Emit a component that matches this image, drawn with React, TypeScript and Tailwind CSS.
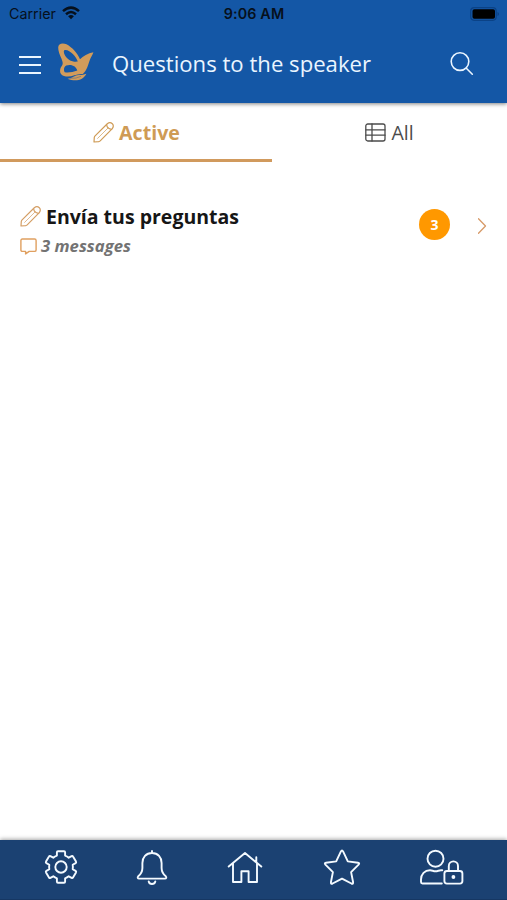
import React from 'react';

interface IconProps {
  className?: string;
}

const stroke = {
  fill: 'none',
  stroke: 'currentColor',
  strokeLinecap: 'round' as const,
  strokeLinejoin: 'round' as const,
};

const PencilIcon = ({ className }: IconProps) => (
  <svg viewBox="0 0 21 21" className={className} {...stroke} strokeWidth={1.2}>
    <path d="M1 20 L1.3 15.3 Q1.5 14.4 2.1 13.8 L14.3 1.7 Q17 -.3 19.3 1.7 Q21.3 4 19.3 6.7 L7.2 18.9 Q6.6 19.5 5.7 19.7 Z" />
    <path d="M13.6 2.5 Q14 6.6 18.6 7.4" />
    <path d="M15.2 5.8 L4.6 16.4" strokeWidth={0.7} />
  </svg>
);

const TableIcon = ({ className }: IconProps) => (
  <svg viewBox="0 0 21 19" className={className} {...stroke} strokeWidth={1.3}>
    <rect x="0.8" y="1" width="19.2" height="17" rx="2" />
    <path d="M1 6.8h19M1 12.2h19M7 1v17" />
  </svg>
);

const MessageIcon = ({ className }: IconProps) => (
  <svg viewBox="0 0 17 17" className={className} {...stroke} strokeWidth={1.4}>
    <path d="M2.4 1h12.2q1.5 0 1.5 1.5v9.4q0 1.5-1.5 1.5H9.2L5.6 15.9v-2.5H2.4Q.9 13.4.9 11.9V2.5Q.9 1 2.4 1Z" />
  </svg>
);

const ButterflyLogo = () => (
  <svg viewBox="0 0 38 40" className="h-10 w-[38px] shrink-0" fill="#d29c5b">
    <path
      fillRule="evenodd"
      d="M1.2 4.5 C1.2 .5 5.500 -.6 9.500 1.300 C15.500 4.500 20.500 10.500 23 16.200 C26 13 31 10.200 36.400 9.200 C35.500 12 34 14 33 16.500 C31 22 30 27.500 25.800 31 C18.500 30.300 14.500 35 7 33 C2.200 31.500 2 26.500 5.200 22.300 C6.200 20.500 5.600 18.500 4.400 15.500 C2.500 11.200 1.200 8 1.200 4.500Z M7.200 7.300 C5.800 9.500 8.400 14.300 12 16.700 C14.800 18.500 18 19 20.800 18.600 C19.200 13.300 11.500 5.300 7.200 7.300Z M9.200 22.600 C6.900 24 6.300 27.300 7.700 29.200 C11.400 30 16 29 20.300 27.500 C19.500 23.300 14 20.500 9.200 22.600Z"
    />
    <path d="M10.500 35.800 C15.500 35.600 17.400 31.900 22 32 C24.800 32 27 31.800 29.400 30.800 C26.300 37.300 18.500 39 10.500 35.800Z" />
    <path d="M13 35.300 Q19.500 35.800 24 33.300" fill="none" stroke="#1457a6" strokeWidth="0.4" />
  </svg>
);

const WifiIcon = () => (
  <svg viewBox="0 0 18 14" className="-mt-px h-3.5 w-[18px]" fill="none" stroke="#06101c" strokeWidth="2.5">
    <path d="M1 5.1 Q9-1.9 17 5.1" />
    <path d="M4 8.2 Q9 3.8 14 8.2" />
    <path d="M6.1 10.2 Q9 7.8 11.9 10.2 L9 13.3Z" fill="#06101c" stroke="none" />
  </svg>
);

const GearIcon = () => (
  <svg viewBox="0 0 34 34" className="-mt-0.5 size-[34px]" {...stroke} strokeWidth={1.9}>
    <path d="M12.900 5.600V2.300q0-1.100 1.100-1.100h6q1.100 0 1.100 1.100v3.300q2 .7 3.600 2.100l2.900-1.600q.9-.5 1.400.4l3 5.100q.5.900-.4 1.500l-2.900 1.700q.4 2.200 0 4.400l2.900 1.700q.9.600.4 1.500l-3 5.100q-.5.900-1.400.4l-2.900-1.600q-1.600 1.400-3.600 2.100v3.300q0 1.100-1.100 1.100h-6q-1.100 0-1.100-1.100v-3.300q-2-.7-3.600-2.100l-2.900 1.600q-.9.500-1.400-.4l-3-5.100q-.5-.9.400-1.500l2.900-1.700q-.4-2.200 0-4.400l-2.900-1.700q-.9-.6-.4-1.500l3-5.100q.5-.9 1.400-.4l2.900 1.600q1.600-1.400 3.600-2.100Z" />
    <circle cx="17" cy="17" r="5.7" />
  </svg>
);

const BellIcon = () => (
  <svg viewBox="0 0 32 36" className="h-9 w-8" {...stroke} strokeWidth={1.9}>
    <path d="M16 1v2M16 3C10 3 6.400 7.300 6.400 13v5c0 4-1.600 6.200-4.200 8.300-1 1-.4 2.300.8 2.300h26c1.200 0 1.800-1.300.8-2.300-2.600-2.100-4.200-4.300-4.200-8.300v-5C25.600 7.300 22 3 16 3Z" />
    <path d="M12.700 31.500q.6 2.500 3.300 2.500t3.300-2.500" />
  </svg>
);

const HomeIcon = () => (
  <svg viewBox="0 0 36 34" className="h-[34px] w-9" {...stroke} strokeWidth={1.9}>
    <path d="M1.700 15.600 18 2l16.300 13.600M6 12.500V31h8.400V20.300h7.200V31H30V12.500M29.300 11V6.300" />
  </svg>
);

const StarIcon = () => (
  <svg viewBox="0 0 38 38" className="size-[38px]" {...stroke} strokeWidth={1.9}>
    <path d="M17.800 2.600q1.200-2.200 2.400 0l4.600 9.800 10.200 1.400q2 .3.600 1.800l-7.500 7.500 2 10.200q.2 2-1.700 1.200L19 29.600l-9.400 4.900q-1.900.8-1.700-1.200l2-10.200-7.500-7.500q-1.400-1.500.6-1.800l10.200-1.400Z" />
  </svg>
);

const UserLockIcon = () => (
  <svg viewBox="0 0 45 37" className="h-[37px] w-[45px]" {...stroke} strokeWidth={1.9}>
    <circle cx="16.5" cy="9.7" r="8" />
    <path d="M22.800 34.500H3.500q-1.500 0-1.500-1.500v-2.500c0-5.500 3.700-9.300 9-9.300 2.200 0 3.200 1.100 5.500 1.100s3.300-1.100 5.500-1.100h1.300" />
    <rect x="25.400" y="22" width="18" height="12.600" rx="2.500" />
    <path d="M29.800 21.800v-4.800a4.600 4.600 0 0 1 9.200 0v4.800" />
    <circle cx="34.400" cy="28" r="1.900" fill="currentColor" stroke="none" />
  </svg>
);

const StatusBar = () => (
  <div className="grid h-7 grid-cols-3 items-center pl-[9px] pr-[7px] font-[Inter,sans-serif] text-sm text-[#06101c]">
    <div className="flex items-center gap-[6px]">
      <span className="text-[14.3px]">Carrier</span>
      <WifiIcon />
    </div>
    <span className="pr-px text-center text-[14.3px] font-semibold tracking-[0.15px]">9:06 AM</span>
    <svg viewBox="0 0 30 14" className="-mt-px h-3.5 w-[30px] justify-self-end">
      <rect x="0.7" y="0.7" width="25.5" height="12.6" rx="3.5" fill="none" stroke="#0b4286" strokeWidth="1.2" />
      <rect x="2.5" y="2.3" width="22.5" height="9.4" rx="1.8" fill="#000" />
      <path d="M27.5 5v4q1.500-.5 1.500-2t-1.500-2Z" fill="#0b4286" />
    </svg>
  </div>
);

const App = () => {
  return (
    <div className="flex h-[900px] w-[507px] flex-col overflow-hidden bg-white font-['Open_Sans',sans-serif]">
      <header className="z-10 h-[103px] shrink-0 bg-[#1457a6] shadow-[0_1px_4px_rgba(0,0,0,0.5)]">
        <StatusBar />
        <div className="flex h-[72px] items-center pl-[19px] pr-[33px] text-[#eaf5ff]">
          <svg viewBox="0 0 22 18" className="mt-0.5 h-[18px] w-[22px]" fill="none" stroke="currentColor" strokeWidth="1.8">
            <path d="M0 1h22M0 9h22M0 17h22" />
          </svg>
          <div className="-mt-0.5 ml-4">
            <ButterflyLogo />
          </div>
          <h1 className="-mt-0.5 ml-[17px] whitespace-nowrap text-[22.15px] leading-none">Questions to the speaker</h1>
          <svg viewBox="0 0 24 24" className="-mt-px ml-auto size-6" {...stroke} strokeWidth={1.6}>
            <circle cx="10" cy="9.6" r="8.8" />
            <path d="m16.300 16.200 6 6" />
          </svg>
        </div>
      </header>

      <div className="flex h-[59px] shrink-0 text-xl leading-none">
        <div className="flex w-[272px] items-center justify-center gap-[5px] border-b-[3px] border-[#d19a5d] pt-[3px] pl-px font-bold text-[#cf9b55]">
          <PencilIcon className="size-[21px]" />
          <span className="text-[19.6px]">Active</span>
        </div>
        <div className="flex flex-1 items-center justify-center gap-[5px] pb-px text-[#4b4b4b]">
          <TableIcon className="h-[19px] w-[21px]" />
          <span className="mt-0.5 text-[19.5px]">All</span>
        </div>
      </div>

      <main className="flex flex-1 items-start justify-between pl-5 pr-5 pt-[42px]">
        <div>
          <div className="flex h-6 items-center gap-[5px]">
            <PencilIcon className="size-[21px] text-[#d49e64]" />
            <span className="mt-0.5 whitespace-nowrap text-[19.5px] font-bold leading-none text-[#161616]">Envía tus preguntas</span>
          </div>
          <div className="mt-[7px] flex h-[22px] items-center gap-1">
            <MessageIcon className="size-[17px] text-[#e0a060]" />
            <span className="whitespace-nowrap text-[16.7px] font-bold italic leading-none text-[#737373]">3 messages</span>
          </div>
        </div>
        <div className="mt-[5px] flex items-center gap-7">
          <span className="flex size-[31px] items-center justify-center rounded-full bg-[#ff9800] text-sm font-bold leading-none text-white">
            3
          </span>
          <svg viewBox="0 0 9 16" className="mt-[3px] h-4 w-[9px] text-[#d79a68]" {...stroke} strokeWidth={1.3}>
            <path d="m.5 .8 7 7.200-7 7.200" />
          </svg>
        </div>
      </main>

      <nav className="h-[60px] shrink-0 border-b border-[#163763] bg-[#1b4172] text-[#f4faff] shadow-[0_-1px_4px_rgba(0,0,0,0.35)]">
        <div className="flex h-[55px] items-center pl-11">
          <GearIcon />
          <div className="ml-[58px]">
            <BellIcon />
          </div>
          <div className="ml-[59px]">
            <HomeIcon />
          </div>
          <div className="ml-[60px]">
            <StarIcon />
          </div>
          <div className="ml-[58px]">
            <UserLockIcon />
          </div>
        </div>
      </nav>
    </div>
  );
};

export default App;
